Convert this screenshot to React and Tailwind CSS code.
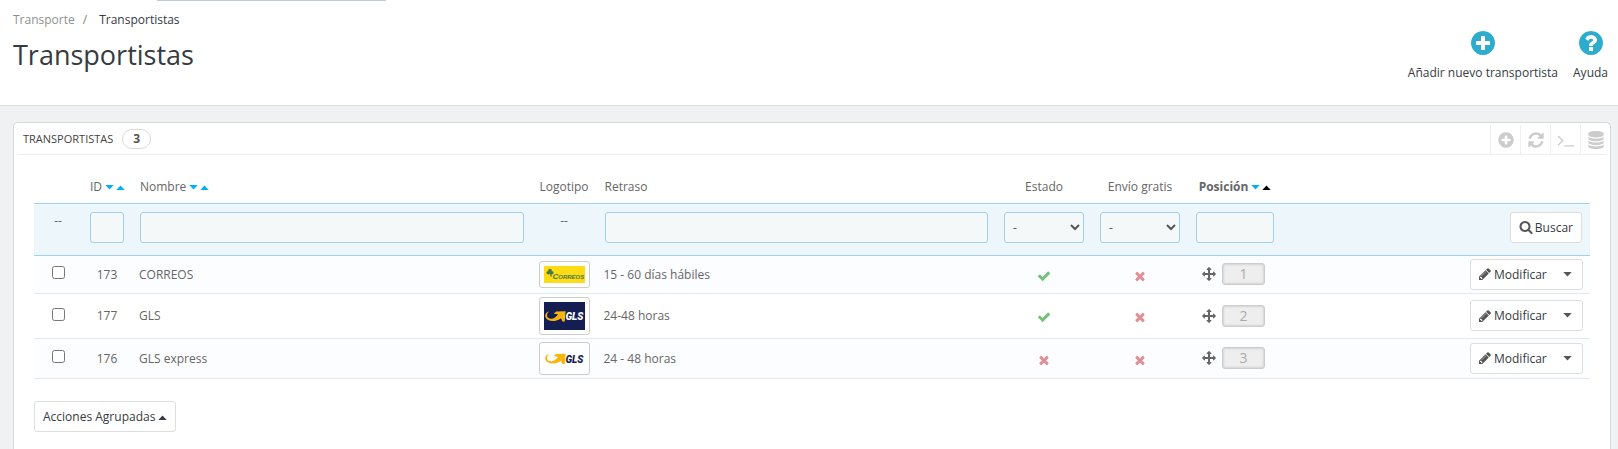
import React from "react";

const CIRCLE =
  "M1664 896q0 209-103 385.5t-279.5 279.5-385.5 103-385.5-103-279.5-279.5-103-385.5 103-385.5 279.5-279.5 385.5-103 385.5 103 279.5 279.5 103 385.5z";

const PATHS = {
  search:
    "M1216 832q0-185-131.5-316.5t-316.5-131.5-316.5 131.5-131.5 316.5 131.5 316.5 316.5 131.5 316.5-131.5 131.5-316.5zm512 832q0 52-38 90t-90 38q-54 0-90-38l-343-342q-179 124-399 124-143 0-273.5-55.5t-225-150-150-225-55.5-273.5 55.5-273.5 150-225 225-150 273.5-55.5 273.5 55.5 225 150 150 225 55.5 273.5q0 220-124 399l343 343q37 37 37 90z",
  check:
    "M1671 566q0 40-28 68l-724 724-136 136q-28 28-68 28t-68-28l-136-136-362-362q-28-28-28-68t28-68l136-136q28-28 68-28t68 28l294 295 656-657q28-28 68-28t68 28l136 136q28 28 28 68z",
  times:
    "M1490 1322q0 40-28 68l-136 136q-28 28-68 28t-68-28l-294-294-294 294q-28 28-68 28t-68-28l-136-136q-28-28-28-68t28-68l294-294-294-294q-28-28-28-68t28-68l136-136q28-28 68-28t68 28l294 294 294-294q28-28 68-28t68 28l136 136q28 28 28 68t-28 68l-294 294 294 294q28 28 28 68z",
  plus:
    "M1344 960v-128q0-26-19-45t-45-19h-256v-256q0-26-19-45t-45-19h-128q-26 0-45 19t-19 45v256h-256q-26 0-45 19t-19 45v128q0 26 19 45t45 19h256v256q0 26 19 45t45 19h128q26 0 45-19t19-45v-256h256q26 0 45-19t19-45z" +
    CIRCLE,
  question:
    "M1024 1376v-192q0-14-9-23t-23-9h-192q-14 0-23 9t-9 23v192q0 14 9 23t23 9h192q14 0 23-9t9-23zm256-672q0-88-55.5-163t-138.5-116-170-41q-243 0-371 213-15 24 8 42l132 100q7 6 19 6 16 0 25-12 53-68 86-92 34-24 86-24 48 0 85.5 26t37.5 59q0 38-20 61t-68 45q-63 28-115.5 86.5t-52.5 125.5v36q0 14 9 23t23 9h192q14 0 23-9t9-23q0-19 21.5-49.5t54.5-49.5q32-18 49-28.5t46-35 44.5-48 28-60.5 12.5-81z" +
    CIRCLE,
  refresh:
    "M1639 1056q0 5-1 7-64 268-268 434.5t-478 166.5q-146 0-282.5-55t-243.5-157l-129 129q-19 19-45 19t-45-19-19-45v-448q0-26 19-45t45-19h448q26 0 45 19t19 45-19 45l-137 137q71 66 161 102t187 36q134 0 250-65t186-179q11-17 53-117 8-23 30-23h192q13 0 22.5 9.5t9.5 22.5zm25-800v448q0 26-19 45t-45 19h-448q-26 0-45-19t-19-45 19-45l138-138q-148-137-349-137-134 0-250 65t-186 179q-11 17-53 117-8 23-30 23h-199q-13 0-22.5-9.5t-9.5-22.5v-7q65-268 270-434.5t480-166.5q146 0 284 55.5t245 156.5l130-129q19-19 45-19t45 19 19 45z",
  terminal:
    "M649 983l-466 466q-10 10-23 10t-23-10l-50-50q-10-10-10-23t10-23l393-393-393-393q-10-10-10-23t10-23l50-50q10-10 23-10t23 10l466 466q10 10 10 23t-10 23zm1079 457v64q0 14-9 23t-23 9h-960q-14 0-23-9t-9-23v-64q0-14 9-23t23-9h960q14 0 23 9t9 23z",
  database:
    "M896 768q237 0 443-43t325-127v170q0 69-103 128t-280 93.5-385 34.5-385-34.5-280-93.5-103-128v-170q119 84 325 127t443 43zm0 768q237 0 443-43t325-127v170q0 69-103 128t-280 93.5-385 34.5-385-34.5-280-93.5-103-128v-170q119 84 325 127t443 43zm0-384q237 0 443-43t325-127v170q0 69-103 128t-280 93.5-385 34.5-385-34.5-280-93.5-103-128v-170q119 84 325 127t443 43zm0-1152q208 0 385 34.5t280 93.5 103 128v128q0 69-103 128t-280 93.5-385 34.5-385-34.5-280-93.5-103-128v-128q0-69 103-128t280-93.5 385-34.5z",
  pencil:
    "M491 1536l91-91-235-235-91 91v107h128v128h107zm523-928q0-22-22-22-10 0-17 7l-542 542q-7 7-7 17 0 22 22 22 10 0 17-7l542-542q7-7 7-17zm-54-192l416 416-832 832h-416v-416zm683 96q0 53-37 90l-166 166-416-416 166-165q36-38 90-38 53 0 91 38l235 234q37 39 37 91z",
  arrows:
    "M1792 896q0 26-19 45l-256 256q-19 19-45 19t-45-19-19-45v-128h-384v384h128q26 0 45 19t19 45-19 45l-256 256q-19 19-45 19t-45-19l-256-256q-19-19-19-45t19-45 45-19h128v-384h-384v128q0 26-19 45t-45 19-45-19l-256-256q-19-19-19-45t19-45l256-256q19-19 45-19t45 19 19 45v128h384v-384h-128q-26 0-45-19t-19-45 19-45l256-256q19-19 45-19t45 19l256 256q19 19 19 45t-19 45-45 19h-128v384h384v-128q0-26 19-45t45-19 45 19l256 256q19 19 19 45z",
};

function Icon({ name, className }) {
  return (
    <svg viewBox="0 0 1792 1792" fill="currentColor" aria-hidden="true" className={`shrink-0 ${className}`}>
      <path d={PATHS[name]} />
    </svg>
  );
}

function Caret({ up, className = "" }) {
  return (
    <svg viewBox="0 0 9 5" fill="currentColor" aria-hidden="true" className={`h-[5px] w-[9px] shrink-0 ${className}`}>
      <path d={up ? "M0.3 5L4.5 0.4L8.7 5z" : "M0.3 0L4.5 4.6L8.7 0z"} />
    </svg>
  );
}

function Sort({ active }) {
  return (
    <span className="ml-[3px] inline-flex items-center gap-[2px] align-middle text-[#00aff0]">
      <button type="button" aria-label="Orden descendente" className="flex pb-px"><Caret /></button>
      <button type="button" aria-label="Orden ascendente" className={active ? "flex text-black" : "flex"}>
        <Caret up />
      </button>
    </span>
  );
}

function GlsMark({ dark, height }) {
  return (
    <svg viewBox={`0 0 41 ${height}`} className="block w-[41px]" role="img" aria-label="GLS">
      <rect width="41" height={height} fill={dark ? "#151e52" : "#fefefe"} />
      <g transform={`translate(0 ${height / 2 - 5})`}>
        <path
          d="M5.2 0.6C2 1.2 0.6 3.8 1.5 6.2C3.4 10.9 12 11.3 17 7.2L18.4 10.6L20.8 10.4L21.6 0.2L12.2 0.6L9.6 2.8L14 3.2C12.6 5.6 10.2 7.6 7.2 7.8C3 8 1.4 3.4 5.2 0.6z"
          fill="#fab50b"
        />
        <text
          x="21.5"
          y="9.4"
          fontFamily="Roboto, sans-serif"
          fontSize="10"
          fontWeight="900"
          fontStyle="italic"
          fill={dark ? "#ffffff" : "#151e52"}
        >
          GLS
        </text>
      </g>
    </svg>
  );
}

function CorreosMark() {
  return (
    <svg viewBox="0 0 41 17" className="block w-[41px]" role="img" aria-label="Correos">
      <rect width="41" height="17" fill="#fddc16" />
      <g fill="#45774c">
        <circle cx="6" cy="4.6" r="1.8" />
        <circle cx="4.3" cy="6.8" r="1.8" />
        <circle cx="7.8" cy="6.8" r="1.8" />
        <path d="M5.4 6h1.2l1.4 4.4h-1.4z" />
        <text x="8.5" y="13.4" fontFamily="Liberation Sans, sans-serif" fontWeight="700" fontStyle="italic" fontSize="8">
          C<tspan fontSize="6">ORREOS</tspan>
        </text>
      </g>
    </svg>
  );
}

const ROWS = [
  { id: 173, name: "CORREOS", logo: <CorreosMark />, delay: "15 - 60 días hábiles", on: true, pos: 1 },
  { id: 177, name: "GLS", logo: <GlsMark dark height={28} />, delay: "24-48 horas", on: true, pos: 2 },
  { id: 176, name: "GLS express", logo: <GlsMark height={23} />, delay: "24 - 48 horas", on: false, pos: 3 },
];

const field = "block h-[31px] w-full rounded-[3px] border border-[#a0d0eb] bg-[#f5f8f9] px-2 text-xs text-[#555]";
const button = "rounded-[3px] border border-[#dedede] bg-white text-[#363a41]";

function Status({ on }) {
  return (
    <button type="button" aria-label={on ? "Activado" : "Desactivado"} className="mx-auto mt-[3px] flex">
      <Icon name={on ? "check" : "times"} className={on ? "size-[14px] text-[#72c279]" : "size-[14px] text-[#e08f95]"} />
    </button>
  );
}

const TOOLS = [
  ["plus", "Añadir nuevo"],
  ["refresh", "Refrescar lista"],
  ["terminal", "Mostrar consulta SQL"],
  ["database", "Exportar a Gestor SQL"],
];

export default function App() {
  return (
    <div className="flex min-h-screen flex-col bg-[#eff1f2] font-['Open_Sans',sans-serif] text-[12px] leading-[17px] text-[#666]">
      <header className="border-b border-[#dddddf] bg-white">
        <div className="ml-[157px] h-px w-[229px] bg-[#bbcdd2]" />
        <div className="flex justify-between pr-[10px] pl-[13px]">
          <div>
            <nav aria-label="Ruta" className="flex pt-[10px]">
              <a href="#transporte" className="text-[#8d918d]">Transporte</a>
              <span className="pr-3 pl-2 text-[#7b8a70]">/</span>
              <span className="text-[#363a41]">Transportistas</span>
            </nav>
            <h1 className="pt-[7px] text-[27px] leading-10 text-[#363a41]">Transportistas</h1>
          </div>
          <div className="flex gap-[15px] pt-7 pb-6 text-[#363a41]">
            <a href="#nuevo" className="flex flex-col items-center">
              <Icon name="plus" className="size-7 text-[#2eacce]" />
              <span className="pt-[7px]">Añadir nuevo transportista</span>
            </a>
            <a href="#ayuda" className="flex flex-col items-center">
              <Icon name="question" className="size-7 text-[#2eacce]" />
              <span className="pt-[7px]">Ayuda</span>
            </a>
          </div>
        </div>
      </header>

      <main className="flex grow flex-col pt-4 pr-[7px] pl-[13px]">
        <section className="grow rounded-t-[5px] border border-b-0 border-[#d3d8db] bg-white px-1">
          <div className="flex h-8 items-center border-b border-[#eee] pl-[5px]">
            <h2 className="text-[11px] text-[#444]">TRANSPORTISTAS</h2>
            <span className="ml-[9px] flex h-5 w-[29px] items-center justify-center rounded-full border border-[#d9d9d9] font-bold text-[#555]">
              3
            </span>
            <div className="mt-[2px] -mr-1 ml-auto flex self-stretch">
              {TOOLS.map(([icon, label]) => (
                <button
                  key={icon}
                  type="button"
                  aria-label={label}
                  className="flex w-[30px] items-center justify-center border-l border-[#eee] text-[#ccc]"
                >
                  <Icon name={icon} className="size-[18px]" />
                </button>
              ))}
            </div>
          </div>

          <div className="px-4 pt-[15px]">
            <table className="w-full table-fixed border-collapse text-left">
              <colgroup>
                <col className="w-12" />
                <col className="w-[50px]" />
                <col />
                <col className="w-[65px]" />
                <col />
                <col className="w-24" />
                <col className="w-24" />
                <col className="w-[94px]" />
                <col className="w-[308px]" />
              </colgroup>
              <thead>
                <tr className="h-[33px] border-b border-[#a0d0eb] whitespace-nowrap [&>th]:px-2 [&>th]:font-normal">
                  <td />
                  <th>ID<Sort /></th>
                  <th>Nombre<Sort /></th>
                  <th className="text-center">Logotipo</th>
                  <th>Retraso</th>
                  <th className="text-center">Estado</th>
                  <th className="text-center">Envío gratis</th>
                  <th className="text-center"><span className="font-bold">Posición</span><Sort active /></th>
                  <td />
                </tr>
                <tr className="border-b border-[#a0d0eb] bg-[#ecf6fb] [&>td]:px-2 [&>td]:pt-2 [&>td]:pb-3 [&>td]:align-top">
                  <td className="text-center">--</td>
                  <td><input type="text" aria-label="Filtrar por ID" className={field} /></td>
                  <td><input type="text" aria-label="Filtrar por nombre" className={field} /></td>
                  <td className="text-center">--</td>
                  <td><input type="text" aria-label="Filtrar por retraso" className={field} /></td>
                  <td>
                    <select aria-label="Filtrar por estado" className={`${field} pr-0 pl-1`}>
                      <option>-</option>
                      <option>Sí</option>
                      <option>No</option>
                    </select>
                  </td>
                  <td>
                    <select aria-label="Filtrar por envío gratis" className={`${field} pr-0 pl-1`}>
                      <option>-</option>
                      <option>Sí</option>
                      <option>No</option>
                    </select>
                  </td>
                  <td><input type="text" aria-label="Filtrar por posición" className={field} /></td>
                  <td>
                    <button type="button" className={`${button} ml-auto flex h-[31px] items-center gap-[2px] px-2`}>
                      <Icon name="search" className="size-[14px] text-[#555]" />
                      Buscar
                    </button>
                  </td>
                </tr>
              </thead>
              <tbody>
                {ROWS.map((row) => (
                  <tr key={row.id} className="border-b border-[#e6e9ec] odd:bg-[#fcfdff] [&>td]:px-[7px] [&>td]:py-[3px]">
                    <td>
                      <input type="checkbox" aria-label={`Seleccionar ${row.name}`} className="mx-auto mb-[3px] block size-[13px]" />
                    </td>
                    <td className="text-center">{row.id}</td>
                    <td>{row.name}</td>
                    <td>
                      <div className="w-[51px] rounded-[3px] border border-[#ccc] bg-white p-1">{row.logo}</div>
                    </td>
                    <td>{row.delay}</td>
                    <td><Status on={row.on} /></td>
                    <td><Status on={false} /></td>
                    <td>
                      <div className="flex items-center gap-[6px] pl-[7px]">
                        <Icon name="arrows" className="size-[14px]" />
                        <span className="flex h-[22px] w-[43px] items-center justify-center rounded-[3px] border border-[#ccc] bg-[#eee] text-sm text-[#aaa] shadow-[inset_0_0_2px_1px_#d4d4d4]">
                          {row.pos}
                        </span>
                      </div>
                    </td>
                    <td>
                      <div className={`${button} ml-auto flex h-[31px] w-[113px]`}>
                        <button type="button" className="flex items-center gap-[2px] pl-[7px]">
                          <Icon name="pencil" className="size-[14px] text-[#555]" />
                          Modificar
                        </button>
                        <button type="button" aria-label="Más acciones" className="flex grow items-center justify-end pr-[10px] text-[#555]">
                          <Caret />
                        </button>
                      </div>
                    </td>
                  </tr>
                ))}
              </tbody>
            </table>

            <button type="button" className={`${button} mt-[22px] flex h-[31px] items-center gap-[3px] px-2`}>
              Acciones Agrupadas
              <Caret up className="mt-[3px]" />
            </button>
          </div>
        </section>
      </main>
    </div>
  );
}
